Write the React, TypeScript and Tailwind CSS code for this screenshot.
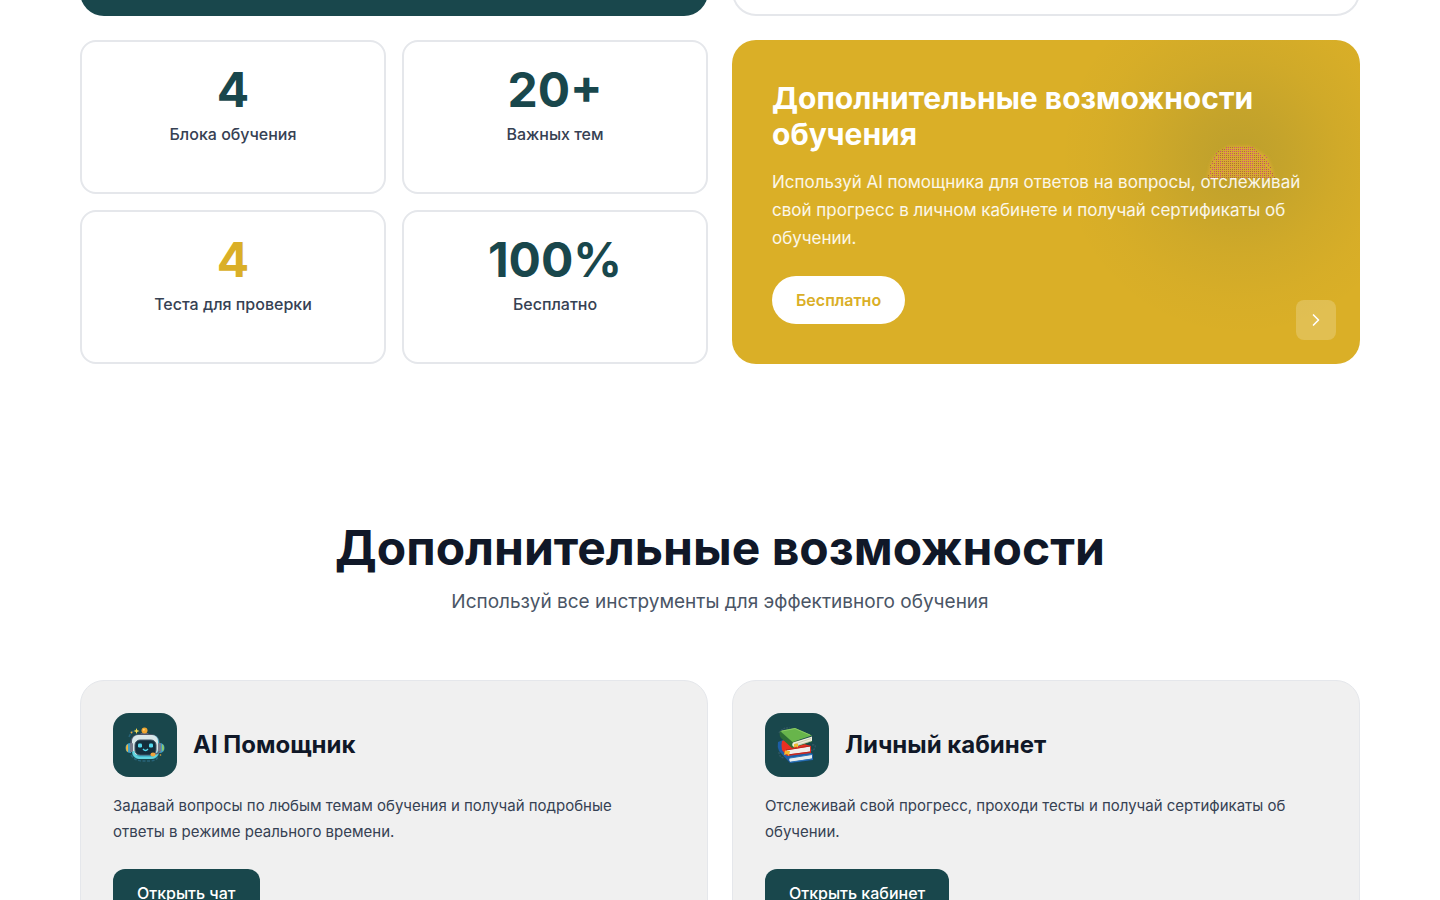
import React from 'react';
import { ChevronRight } from 'lucide-react';

interface Stat {
  value: string;
  label: string;
  accent?: boolean;
}

const STATS: Stat[] = [
  { value: '4', label: 'Блока обучения' },
  { value: '20+', label: 'Важных тем' },
  { value: '4', label: 'Теста для проверки', accent: true },
  { value: '100%', label: 'Бесплатно' },
];

const RobotIcon: React.FC = () => (
  <svg viewBox="0 0 40 40" className="w-10 h-10" aria-hidden="true">
    <path d="M4 12q2-5 6-7M6 30q4 6 11 6h8q6 0 9-5" fill="none" stroke="#28647a" strokeWidth="1.4" strokeDasharray="3 1.5" />
    <path d="M11.500 3l.8 2.200 2.200.8-2.200.8-.8 2.200-.8-2.200-2.200-.8 2.200-.8z" fill="#f5df55" />
    <circle cx="6.500" cy="7.500" r=".9" fill="#e5a93b" />
    <path d="M16 8h7l2 3H14z" fill="#626777" />
    <circle cx="19.500" cy="5.500" r="3" fill="#efa52e" />
    <circle cx="18.800" cy="4.800" r="1" fill="#ffd076" />
    <path d="M6 18q-5.500 0-5.500 5t5.500 5z" fill="#429ec5" />
    <path d="M3 19q-2 1-2 4t2 4z" fill="#f0b43a" />
    <path d="M34 18q5.500 0 5.500 5t-5.500 5z" fill="#429ec5" />
    <path d="M37 19q2 1 2 4t-2 3z" fill="#8fca68" />
    <path d="M5 18q1-9 10-9h10q9 0 10 9v8h-3V16H8v11H5z" fill="#515869" />
    <rect x="7" y="10" width="27" height="24" rx="7" fill="#46b9ce" />
    <rect x="7" y="10" width="26" height="20" rx="6" fill="#d9e7e8" />
    <path d="M8.500 26q0 6 6 7h11q5 0 7-5" fill="none" stroke="#62d5df" strokeWidth="2" />
    <rect x="10" y="15" width="21" height="15" rx="5" fill="#142f3d" stroke="#3f5362" />
    <rect x="13" y="18.500" width="4" height="4" rx="1.200" fill="#53d9ed" />
    <rect x="24" y="18.500" width="4" height="4" rx="1.200" fill="#53d9ed" />
    <path d="M18 24q2.500 3 5 0" fill="none" stroke="#53d9ed" strokeWidth="1.300" />
    <rect x="5" y="18" width="3" height="9" rx="1" fill="#777b8a" />
    <rect x="33" y="18" width="3" height="9" rx="1" fill="#777b8a" />
    <path d="M34 26q0 3-5 3" fill="none" stroke="#5e6577" strokeWidth="1.500" />
    <ellipse cx="28" cy="29.500" rx="2.500" ry="2" fill="#f0a43c" />
    <circle cx="35.500" cy="30" r=".8" fill="#e5a93b" />
  </svg>
);

const BooksIcon: React.FC = () => (
  <svg viewBox="0 0 40 40" className="w-10 h-10" aria-hidden="true">
    <path d="M2 8q4-6 11-5M2 27q0 5 5 6M35 20q4-1 3 3-2 3-4 2" fill="none" stroke="#315663" strokeWidth="1.400" strokeDasharray="2 1" />
    <path d="M1 17l5-2 30 14v6l-23 3L2 26q-2-4-1-9z" fill="#1d5da6" />
    <path d="M13 33l22-3.500v4L14 37q-3-1.500-1-4z" fill="#e7edef" />
    <path d="M13 33l22-3.500M14 37l22-3" fill="none" stroke="#2b75b8" />
    <path d="M5 16l5-2 24 7v7l-24 3-5-6q-1-5 0-9z" fill="#ea3021" />
    <path d="M10 25l23-3.500v5L11 29.500q-3-2-1-4.500z" fill="#f1eeea" />
    <path d="M9 25l24-4M10 30l24-3" fill="none" stroke="#b32722" />
    <path d="M8 25.500l5 .5-1 5-2-2-3 1z" fill="#f3b82d" />
    <path d="M3 6q-1 5 1 7l11 10 20-6v-3L16 16z" fill="#2e6e34" />
    <path d="M3 6l15-3 17 7.500L15.500 17z" fill="#68b54b" />
    <path d="M5 6l13-2.500 15 6.500" fill="none" stroke="#94d06a" strokeWidth=".8" />
    <path d="M16 17.500l19-6v4.500l-18 6q-3-1.500-1-4.500z" fill="#eeefd9" />
    <path d="M18 19l16-5.500M18 21l16-5" fill="none" stroke="#b0b49d" strokeWidth=".6" />
    <path d="M17 19l4-.5v4l-2-1-2 1z" fill="#efbd31" />
  </svg>
);

// Left and right edge of the dome on every second row, starting at y = 7
const DOME_ROWS = [
  [26, 52],
  [21, 55],
  [18, 58],
  [16, 61],
  [15, 64],
  [14, 66],
  [13, 67],
  [12, 68],
  [11, 69],
  [10, 69],
  [10, 70],
  [9, 71],
  [9, 72],
  [8, 73],
  [8, 73],
  [7, 74],
];

function isPink(x: number, y: number) {
  if (x > 41 && x < 54 && y > 16 && y < 29) return true;
  if (x > 22 && x < 60 && y < 16) return (x * 3 + y * 5) % 7 < 5;
  if (x < 22 || x > 58) return (x * 5 + y * 3) % 7 < 4;
  return (x * 7 + y * 11) % 13 < 2;
}

function buildDots(pink: boolean) {
  let d = '';
  DOME_ROWS.forEach(([from, to], row) => {
    const y = 7 + row * 2;
    const start = from % 2 === 0 ? from : from + 1;
    for (let x = start; x <= to; x += 2) {
      const edge = x - from < 4 || to - x < 4;
      if (edge && (x + row) % 3 === 0) continue;
      if (isPink(x, y) === pink) d += `M${x} ${y}h1v1h-1z`;
    }
  });
  return d;
}

const BROWN_DOTS = buildDots(false);
const PINK_DOTS = buildDots(true);

const DotDome: React.FC = () => (
  <svg viewBox="0 0 80 44" className="absolute left-[468px] top-[100px] w-20 h-11" aria-hidden="true">
    <defs>
      <filter id="soft">
        <feGaussianBlur stdDeviation="1.500" />
      </filter>
    </defs>
    <path d="M7 38l3-13 4-8 6-6 9-5 20 0 10 5 8 6 4 8 4 13z" fill="#d8aa32" filter="url(#soft)" />
    <path d={BROWN_DOTS} fill="#b26a38" shapeRendering="crispEdges" />
    <path d={PINK_DOTS} fill="#cf4f74" shapeRendering="crispEdges" />
  </svg>
);

interface FeatureCardProps {
  title: string;
  text: string;
  action: string;
  icon: React.ReactNode;
}

const FeatureCard: React.FC<FeatureCardProps> = ({ title, text, action, icon }) => (
  <article className="bg-[#f0f0f0] border border-gray-200 rounded-3xl p-8">
    <div className="flex items-center gap-4 mb-4">
      <div className="w-16 h-16 shrink-0 rounded-2xl bg-[#19474c] flex items-center justify-center">
        {icon}
      </div>
      <h3 className="text-2xl font-bold text-gray-900">{title}</h3>
    </div>
    <p className="max-w-[540px] text-[15px] leading-[26px] text-gray-700 mb-6">{text}</p>
    <button type="button" className="bg-[#19474c] text-white font-medium px-6 py-3 rounded-xl cursor-pointer">
      {action}
    </button>
  </article>
);

export default function App() {
  return (
    <main className="min-h-screen bg-white font-['Inter','Noto_Sans',sans-serif]">
      <section className="max-w-7xl mx-auto pb-20">
        {/* Lower edge of the previous row */}
        <div className="grid grid-cols-2 gap-6 h-4 overflow-hidden content-end mb-6">
          <div className="h-24 rounded-3xl bg-[#19474c]" />
          <div className="h-24 rounded-3xl border-2 border-gray-200" />
        </div>

        <div className="grid grid-cols-2 gap-6">
          <div className="grid grid-cols-2 gap-4">
            {STATS.map((stat) => (
              <div key={stat.label} className="border-2 border-gray-200 rounded-2xl p-6 text-center">
                <div className={stat.accent ? 'text-5xl font-bold mb-2 text-[#daaf27]' : 'text-5xl font-bold mb-2 text-[#19474c]'}>
                  {stat.value}
                </div>
                <div className="text-base font-medium text-gray-700">{stat.label}</div>
              </div>
            ))}
          </div>

          <div className="relative overflow-hidden rounded-3xl bg-[#daaf27] p-10">
            {/* Glow behind the text */}
            <div className="absolute -top-16 right-[-60px] w-[360px] h-[360px] bg-[radial-gradient(closest-side,rgba(25,71,76,0.15),rgba(25,71,76,0.11)_25%,rgba(25,71,76,0.05)_55%,rgba(25,71,76,0.015)_80%,transparent)]" />
            <DotDome />
            <div className="relative">
              <h2 className="text-3xl font-bold text-white mb-4">Дополнительные возможности обучения</h2>
              <p className="text-[17px] leading-7 text-white/90 mb-6">
                Используй AI помощника для ответов на вопросы, отслеживай свой прогресс в личном кабинете и получай сертификаты об обучении.
              </p>
              <button type="button" className="bg-white text-[#daaf27] font-semibold px-6 py-3 rounded-full cursor-pointer">
                Бесплатно
              </button>
            </div>
            <button type="button" aria-label="Далее" className="absolute right-6 bottom-6 w-10 h-10 rounded-lg bg-white/20 text-white flex items-center justify-center cursor-pointer">
              <ChevronRight size={20} />
            </button>
          </div>
        </div>
      </section>

      <section className="max-w-7xl mx-auto py-20">
        <div className="text-center mb-16">
          <h2 className="text-5xl font-bold text-gray-900 mb-4">Дополнительные возможности</h2>
          <p className="text-[19px] leading-7 text-gray-600">Используй все инструменты для эффективного обучения</p>
        </div>
        <div className="grid grid-cols-2 gap-6">
          <FeatureCard
            title="AI Помощник"
            text="Задавай вопросы по любым темам обучения и получай подробные ответы в режиме реального времени."
            action="Открыть чат"
            icon={<RobotIcon />}
          />
          <FeatureCard
            title="Личный кабинет"
            text="Отслеживай свой прогресс, проходи тесты и получай сертификаты об обучении."
            action="Открыть кабинет"
            icon={<BooksIcon />}
          />
        </div>
      </section>
    </main>
  );
}
